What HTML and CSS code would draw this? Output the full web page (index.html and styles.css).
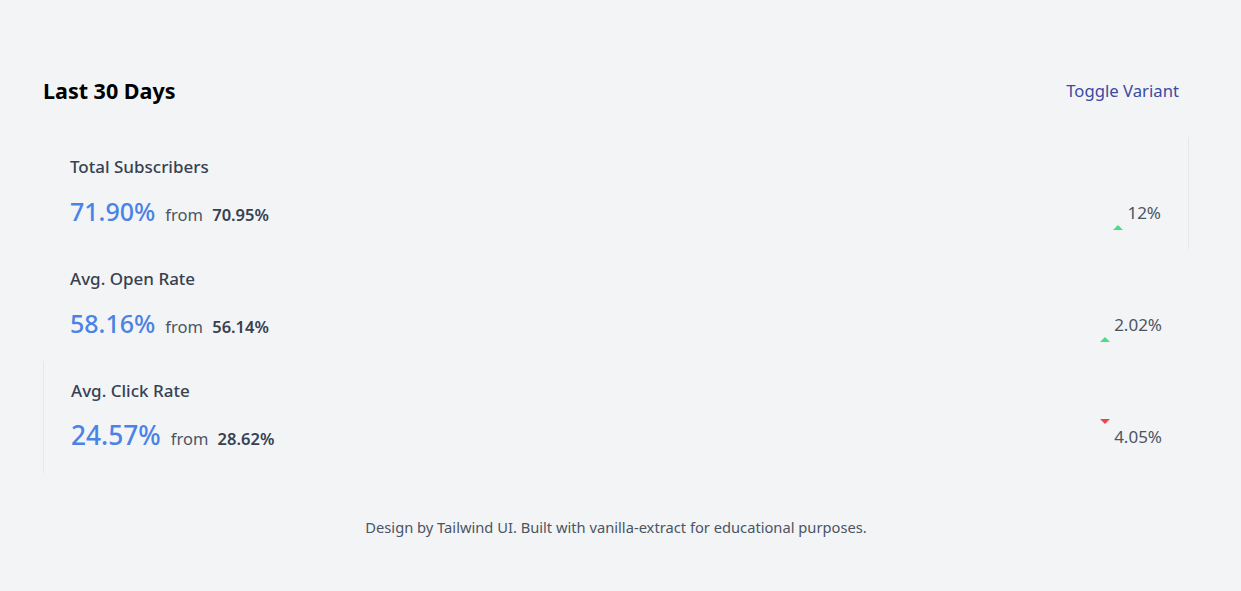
FILE: index.html
```html
<!DOCTYPE html>
<html lang="en">
<head>
<meta charset="utf-8">
<title>Stats</title>
<link rel="stylesheet" href="styles.css">
</head>
<body>
<main class="page">
  <header class="page-header">
    <h3 class="title">Last 30 Days</h3>
    <button class="toggle" type="button">Toggle Variant</button>
  </header>
  <dl class="stats">
    <div class="stat stat--right-border">
      <dt class="stat-label">Total Subscribers</dt>
      <dd class="stat-row">
        <div class="stat-value">71.90%<span class="stat-from">from <b>70.95%</b></span></div>
        <div class="trend trend--up"><span class="tri tri--up"></span><span class="trend-text">12%</span></div>
      </dd>
    </div>
    <div class="stat">
      <dt class="stat-label">Avg. Open Rate</dt>
      <dd class="stat-row">
        <div class="stat-value">58.16%<span class="stat-from">from <b>56.14%</b></span></div>
        <div class="trend trend--up"><span class="tri tri--up"></span><span class="trend-text">2.02%</span></div>
      </dd>
    </div>
    <div class="stat stat--left-border">
      <dt class="stat-label">Avg. Click Rate</dt>
      <dd class="stat-row">
        <div class="stat-value stat-value--large">24.57%<span class="stat-from">from <b>28.62%</b></span></div>
        <div class="trend trend--down"><span class="tri tri--down"></span><span class="trend-text">4.05%</span></div>
      </dd>
    </div>
  </dl>
  <footer class="footer">Design by Tailwind UI. Built with vanilla-extract for educational purposes.</footer>
</main>
</body>
</html>
```

FILE: styles.css
```css
html, body {
  margin: 0;
  padding: 0;
  background: #f3f4f6;
}
body {
  font-family: "Noto Sans", "Open Sans", sans-serif;
  color: #374151;
}
.page {
  width: 1146px;
  margin-left: 43px;
  padding-top: 77px;
}
.page-header {
  display: flex;
  justify-content: space-between;
  align-items: center;
  height: 28px;
}
.title {
  margin: 0;
  font-size: 21.5px;
  font-weight: 700;
  color: #000;
  line-height: 28px;
}
.toggle {
  background: none;
  border: 0;
  padding: 0 10px;
  font-family: inherit;
  font-size: 16.7px;
  color: #3b4aa3;
  line-height: 28px;
  cursor: pointer;
}
.stats {
  margin: 32px 0 0;
  display: flex;
  flex-direction: column;
}
.stat {
  padding: 18px 27px;
  height: 112px;
  box-sizing: border-box;
}
.stat--right-border { border-right: 1px solid #e5e7eb; }
.stat--left-border { border-left: 1px solid #e5e7eb; }
.stat-label {
  font-size: 17px;
  font-weight: 500;
  line-height: 24px;
  color: #374151;
}
.stat-row {
  margin: 16px 0 0;
  display: flex;
  justify-content: space-between;
  align-items: center;
  height: 36px;
}
.stat-value {
  font-size: 25px;
  font-weight: 500;
  color: #4a83e6;
  line-height: 36px;
  display: flex;
  align-items: baseline;
}
.stat-value--large {
  font-size: 26.3px;
}
.stat-from {
  margin-left: 10px;
  font-size: 16.5px;
  font-weight: 400;
  color: #4b5563;
}
.stat-from b {
  margin-left: 5px;
  font-weight: 600;
  color: #374151;
}
.trend {
  display: flex;
  height: 36px;
  font-size: 17px;
  color: #4b5563;
}
.trend--up { align-items: flex-end; }
.trend--down { align-items: flex-start; }
.trend-text {
  align-self: center;
  line-height: 24px;
}
.tri {
  width: 0;
  height: 0;
  border-left: 5px solid transparent;
  border-right: 5px solid transparent;
  margin-right: 4px;
}
.tri--up {
  border-bottom: 5px solid #4ade80;
  margin-bottom: 1px;
}
.tri--down {
  border-top: 5px solid #ef4444;
}
.footer {
  margin-top: 42px;
  text-align: center;
  font-size: 14.7px;
  color: #4b5563;
  line-height: 24px;
}
```
